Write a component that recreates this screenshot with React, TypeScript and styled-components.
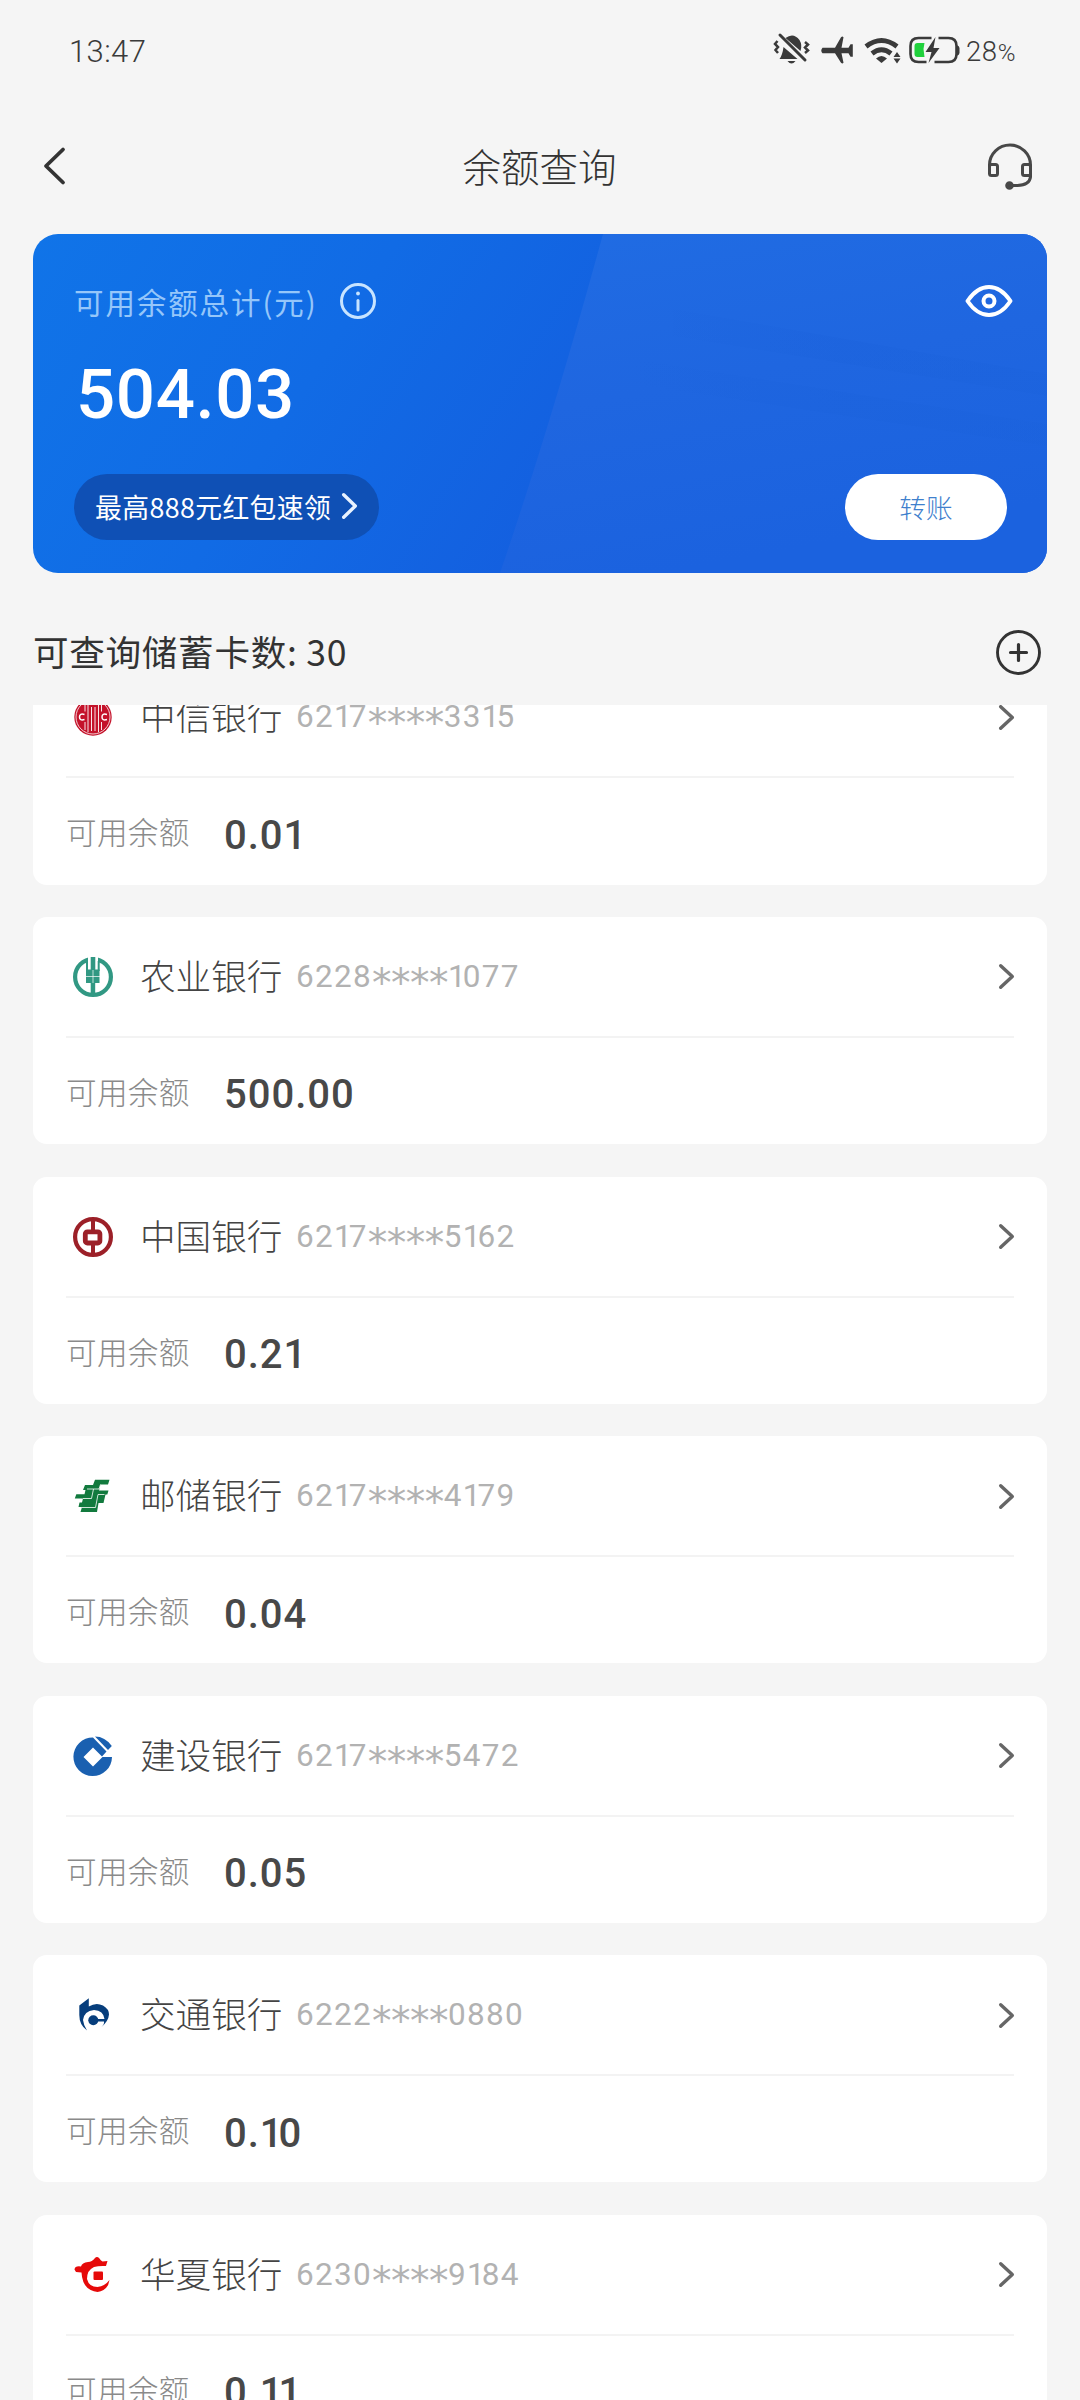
import React from 'react';
import styled, { createGlobalStyle } from 'styled-components';

const cjk = `'Noto Sans CJK SC', 'Noto Sans', sans-serif`;
const digits = `Roboto, Inter, 'Noto Sans CJK SC', sans-serif`;

const GlobalStyle = createGlobalStyle`
  * { box-sizing: border-box; }
  body { margin: 0; background: #f5f5f5; }
  svg { display: block; overflow: visible; flex: none; }
`;

const Screen = styled.div`
  width: 1080px;
  height: 2400px;
  overflow: hidden;
  display: flex;
  flex-direction: column;
  background: #f5f5f5;
  font-family: ${cjk};
  color: #333;
`;

const StatusBar = styled.header`
  height: 102px;
  padding: 0 62px 0 69px;
  display: flex;
  align-items: center;
  justify-content: space-between;
  font-family: ${digits};
  color: #3a3a3a;
`;

const Clock = styled.time`
  font-size: 31px;
  font-weight: 300;
  letter-spacing: 0.4px;
`;

const StatusIcons = styled.div`
  display: flex;
  align-items: center;
`;

const BatteryText = styled.span`
  margin-left: 6px;
  width: 52px;
  font-size: 27.5px;
  font-weight: 300;
  line-height: 40px;
  letter-spacing: 0.6px;
  padding-top: 2px;
  white-space: nowrap;
  small { font-size: 24px; }
`;

const NavBar = styled.nav`
  height: 132px;
  padding: 0 48px 3px 43px;
  display: grid;
  grid-template-columns: 100px 1fr 98px;
  align-items: center;
`;

const NavTitle = styled.h1`
  margin: 0;
  padding: 0 0 3px 2px;
  text-align: center;
  font-size: 38.5px;
  font-weight: 300;
  line-height: 58px;
`;

const NavEnd = styled.div`
  display: flex;
  justify-content: flex-end;
`;

const Summary = styled.section`
  position: relative;
  flex: none;
  height: 339px;
  margin: 0 33px;
  padding: 40px 40px 32px 41px;
  border-radius: 25px;
  overflow: hidden;
  display: flex;
  flex-direction: column;
  background: linear-gradient(122deg, #1074e8 0%, #116be5 30%, #145edf 60%, #145edf 100%);
`;

const Sheen = styled.svg`
  position: absolute;
  left: 0;
  top: 0;
`;

const SummaryRow = styled.div`
  position: relative;
  display: flex;
  align-items: center;
  justify-content: space-between;
`;

const EyeButton = styled.div`
  margin-right: -6px;
`;

const SummaryLabel = styled.div`
  display: flex;
  align-items: center;
  gap: 22px;
  height: 54px;
  padding-bottom: 1px;
  font-size: 29.5px;
  letter-spacing: 1.9px;
  color: #95c6fa;
`;

const Total = styled.strong`
  position: relative;
  height: 106px;
  margin-bottom: 40px;
  padding: 27px 0 0 2px;
  font-family: ${digits};
  font-weight: 500;
  font-size: 69px;
  line-height: 80px;
  letter-spacing: 0.6px;
  color: #fff;
`;

const PromoPill = styled.button`
  display: flex;
  align-items: center;
  gap: 11px;
  height: 66px;
  padding: 0 22px 2px 21px;
  border: 0;
  border-radius: 33px;
  background: #0f50b5;
  color: #fff;
  font-family: ${cjk};
  font-size: 26.8px;
  letter-spacing: 0.4px;
`;

const TransferButton = styled.button`
  width: 162px;
  height: 66px;
  padding: 0 0 2px;
  border: 0;
  border-radius: 33px;
  background: #fff;
  color: #3f80cd;
  font-family: ${cjk};
  font-size: 26.7px;
  font-weight: 300;
`;

const ListHeader = styled.div`
  flex: none;
  height: 132px;
  padding: 27px 39px 0 33px;
  display: flex;
  align-items: center;
  justify-content: space-between;
`;

const ListTitle = styled.h2`
  margin: 0;
  padding-bottom: 3px;
  font-size: 35.6px;
  font-weight: 400;
  line-height: 52px;
  letter-spacing: 0.7px;
`;

const CardList = styled.main`
  flex: 1;
  min-height: 0;
  overflow: hidden;
  padding: 0 33px;
`;

const Cards = styled.div`
  margin-top: -47.6px;
  display: flex;
  flex-direction: column;
  gap: 32.4px;
`;

const BankCard = styled.article`
  height: 227.2px;
  padding: 0 33px;
  border-radius: 14px;
  background: #fff;
`;

const BankHead = styled.div`
  height: 121px;
  padding-top: 1px;
  display: flex;
  align-items: center;
  border-bottom: 2px solid #f3f3f3;
`;

const LogoBox = styled.div`
  width: 40px;
  height: 40px;
  margin: 0 27px 0 7px;
`;

const BankName = styled.span`
  width: 156px;
  padding-bottom: 4px;
  font-size: 35.6px;
  font-weight: 300;
  line-height: 50px;
  color: #444;
`;

const CardNumber = styled.span`
  flex: 1;
  padding-top: 1px;
  font-family: ${digits};
  font-size: 31.5px;
  font-weight: 400;
  line-height: 40px;
  letter-spacing: 1.3px;
  color: #b2b2b2;
  white-space: nowrap;
`;

const Stars = styled.span`
  font-family: 'DejaVu Sans', sans-serif;
  font-size: 39px;
  line-height: 30px;
  letter-spacing: -0.5px;
  vertical-align: -9px;
`;

const NarrowDigit = styled.span<{ $trim: number }>`
  letter-spacing: ${(p) => p.$trim}px;
`;

const BalanceRow = styled.div`
  height: 106px;
  padding-top: 3px;
  display: flex;
  align-items: center;
`;

const BalanceLabel = styled.span`
  width: 158px;
  padding-bottom: 3px;
  font-size: 30.6px;
  font-weight: 300;
  letter-spacing: 0.3px;
  color: #8a8a8a;
`;

const Balance = styled.span`
  padding-top: 5px;
  font-family: ${digits};
  font-size: 40px;
  font-weight: 500;
  letter-spacing: 1px;
  color: #484848;
`;

const Digits = ({ value, trim }: { value: string; trim: number }) => (
  <>
    {value.split(/(1)/).filter(Boolean).map((part, i) =>
      part === '1' ? <NarrowDigit key={i} $trim={trim}>{part}</NarrowDigit> : part,
    )}
  </>
);

const Chevron = ({ w, h, color, sw }: { w: number; h: number; color: string; sw: number }) => (
  <svg width={w} height={h} fill="none" stroke={color} strokeWidth={sw} strokeLinecap="round" strokeLinejoin="round">
    <path d={`M${sw / 2} ${sw / 2}L${w - sw / 2} ${h / 2}L${sw / 2} ${h - sw / 2}`} />
  </svg>
);

const StatusGlyphs = () => (
  <svg width="186" height="34" viewBox="774.500 34 186 34" fill="#3a3a3a">
    <path d="M786 38q8-6 14 2q3 5 1 11zM784 47l14 12h-18q3-4 4-12zM788 61h8q-4 5-8 0z" />
    <path d="M780.500 35l25 25" stroke="#3a3a3a" strokeWidth="3" strokeLinecap="round" />
    <path d="M778 41l-2.500 3 3 3-2.500 3 2.500 3M805.500 42l3 2.500-3 3 3 3-3 2.500" fill="none" stroke="#3a3a3a" strokeWidth="2.500" />
    <path d="M823 47.800h12.500l6-10.500q1.500-1.500 2.500 0l-2 10.500h7l2-3.500h2.300v12.500h-2.300l-2-3.500h-7l2 9.500q-1 1.500-2.500 0l-6-9.500h-12.500q-2.500-2.700 0-5.500z" />
    <g fill="none" stroke="#3a3a3a" strokeWidth="4.800">
      <path d="M866.500 46.500q15.500-12 31 0" />
      <path d="M872.500 53.500q9.500-7.500 19 0" />
    </g>
    <path d="M876.500 58.500q5.500-5 11 0l-5.500 4.500z" />
    <path d="M897.500 52l3.500 5h-7zM894 58.500h7l-3.500 5z" />
    <g fill="none" stroke="#3a3a3a" strokeWidth="2.600">
      <path d="M932 38h-13q-8 0-8 8v8q0 8 8 8h8" />
      <path d="M939 38h10q8 0 8 8v8q0 8-8 8h-14" />
    </g>
    <path d="M957 45q3 1 3 3v5q0 2-3 3z" />
    <path d="M918 43h7l-1 6 1 8h-7q-3 0-3-3v-8q0-3 3-3z" fill="#20d13c" />
    <path d="M936 37l-10 15h6l-3 11 11-15h-6z" />
  </svg>
);

const Headset = () => (
  <svg width="44" height="46" viewBox="0 0 44 46" fill="none" stroke="#484848" strokeWidth="3">
    <path d="M1.500 30V21a20.500 20 0 0 1 41 0v12q-1 8-13 8.500H22" />
    <rect x="1.500" y="20.500" width="8" height="11" rx="2" />
    <rect x="34.500" y="20.500" width="8" height="11" rx="2" />
    <circle cx="21.500" cy="41.500" r="2.800" fill="#484848" />
  </svg>
);

const InfoIcon = () => (
  <svg width="36" height="36" fill="none" stroke="#c8e4ff" strokeWidth="3" strokeLinecap="round">
    <circle cx="18" cy="18" r="16.500" />
    <path d="M18 17.500V27" />
    <circle cx="18" cy="10.500" r="1.900" fill="#c8e4ff" stroke="none" />
  </svg>
);

const EyeIcon = () => (
  <svg width="48" height="32" fill="none" stroke="#fff" strokeWidth="4">
    <path d="M2.500 16Q12 2 24 2T45.500 16Q36 30 24 30T2.500 16z" strokeLinejoin="round" />
    <circle cx="24" cy="16" r="5.500" />
  </svg>
);

const PlusCircle = () => (
  <svg width="45" height="45" fill="none" stroke="#333" strokeWidth="2.900" strokeLinecap="round">
    <circle cx="22.500" cy="22.500" r="21" />
    <path d="M22.500 14.500v16M14.500 22.500h16" strokeWidth="3.200" />
  </svg>
);

const logos: Record<string, React.ReactNode> = {
  citic: (
    <>
      <circle cx="20" cy="20" r="18.700" fill="#c4122a" />
      <circle cx="20" cy="20" r="17" fill="none" stroke="#fff" strokeWidth="0.800" />
      <path d="M15 5v30M25.500 5v30M18.500 10v24M22 10v24M12 7.500v7M28.500 7.500v7M12 25v8M28.500 25v8" stroke="#fff" strokeWidth="0.900" />
      <path d="M11.500 17.500q-5-1.500-5 2.500t5 2.500M34 17.500q-5-1.500-5 2.500t5 2.500" fill="none" stroke="#fff" strokeWidth="1.500" />
    </>
  ),
  abc: (
    <>
      <circle cx="20" cy="20" r="17.900" fill="none" stroke="#319883" strokeWidth="4.200" />
      <path d="M15 -1h10v14H15z" fill="#fff" />
      <path d="M17.700 0h4.600v12.500h-4.600zM13 12.500H26.500V26H22.200V38H17.700V26H13z" fill="#319883" />
      <path d="M14 4v10M25.700 4v10" stroke="#319883" strokeWidth="2" />
      <path d="M13 19.500h14M20 13v13" stroke="#fff" strokeWidth="0.700" />
    </>
  ),
  boc: (
    <g fill="none" stroke="#9c2028">
      <circle cx="20" cy="20" r="17.900" strokeWidth="4.200" />
      <path d="M20 3v10M20 28v9" strokeWidth="4" />
      <rect x="12.300" y="14.800" width="14.600" height="11.200" rx="2" strokeWidth="4.800" />
    </g>
  ),
  psbc: (
    <>
      <path d="M22 3.700H36.500L35 8.500H27.500L26 14.500H35.500L34.300 18.500H32.500L30.500 27H25.500L24 36H7.500L9 31H5.500L6.500 26.500H9L10 22.500H1.800L3.300 18.300H11.500L12.500 14H10L12 9H20z" fill="#127a3e" />
      <path d="M27.500 8.500L26 13H14M20.500 13L18.500 22.500H10M31.500 18.500H25L22.500 31.500H9" fill="none" stroke="#fff" strokeWidth="0.800" />
    </>
  ),
  ccb: (
    <>
      <path d="M20 1.500L33.500 15.500 29 20.500 20 11.500 10.500 21 20 30.500 29.500 21H39A19.300 19.300 0 1 1 20 1.500z" fill="#1a60b0" />
      <path d="M22 0.500Q32 0.500 38.800 10L35 14z" fill="#1a60b0" />
    </>
  ),
  bocom: (
    <g fill="#073e7c">
      <path d="M6.300 10.500L15.800 3.300V11.500Q23 7 30 10.500Q36 14 36 19.500Q35.500 26 28.500 32Q31.500 29 31 26.500H24V24H31.500Q30.500 15.500 21 15Q11 16 10 25Q10.500 30 14 35.500Q6.300 30 6.300 20z" />
      <circle cx="20.300" cy="25.300" r="5" />
    </g>
  ),
  hxb: (
    <g fill="#e60a0a">
      <path d="M1.500 14.500q.5-4 6.500-3 1-4 7-4.500 4 0 7-4 2-2 4.500.5 1 2 3 3l5-.5-1.500 5q-7-.5-12 1-7 3-7 12 2 8 10.500 8 7.500-1 12-7-1.500 10.500-12 12Q9.500 35.500 8.500 17.500L3 17z" />
      <rect x="20.500" y="16.500" width="9.500" height="8.500" rx="1" />
    </g>
  ),
};

const accounts = [
  { logo: 'citic', name: '中信银行', head: '6217', tail: '3315', balance: '0.01' },
  { logo: 'abc', name: '农业银行', head: '6228', tail: '1077', balance: '500.00' },
  { logo: 'boc', name: '中国银行', head: '6217', tail: '5162', balance: '0.21' },
  { logo: 'psbc', name: '邮储银行', head: '6217', tail: '4179', balance: '0.04' },
  { logo: 'ccb', name: '建设银行', head: '6217', tail: '5472', balance: '0.05' },
  { logo: 'bocom', name: '交通银行', head: '6222', tail: '0880', balance: '0.10' },
  { logo: 'hxb', name: '华夏银行', head: '6230', tail: '9184', balance: '0.11' },
];

export default function App() {
  return (
    <Screen>
      <GlobalStyle />
      <StatusBar>
        <Clock>13:47</Clock>
        <StatusIcons>
          <StatusGlyphs />
          <BatteryText>28<small>%</small></BatteryText>
        </StatusIcons>
      </StatusBar>
      <NavBar>
        <svg width="22" height="38" fill="none" stroke="#333" strokeWidth="3.800" strokeLinecap="round" strokeLinejoin="round">
          <path d="M20 1.500L3 18L20 34.500" />
        </svg>
        <NavTitle>余额查询</NavTitle>
        <NavEnd><Headset /></NavEnd>
      </NavBar>
      <Summary>
        <Sheen width="1014" height="339">
          <defs>
            <linearGradient id="sheen" x1="0" y1="0" x2="0.300" y2="1">
              <stop offset="0" stopColor="#206ce3" />
              <stop offset="0.500" stopColor="#1f66e0" />
              <stop offset="1" stopColor="#1b62df" />
            </linearGradient>
            <linearGradient id="band" x1="0" y1="0" x2="1" y2="0">
              <stop offset="0" stopColor="#1b62dc" stopOpacity="0" />
              <stop offset="0.500" stopColor="#1b62dc" stopOpacity="0.400" />
              <stop offset="1" stopColor="#1b62dc" stopOpacity="0.400" />
            </linearGradient>
          </defs>
          <path d="M570 0H1014V339H467Q518 190 570 0z" fill="url(#sheen)" />
          <path d="M640 75L1014 140V162L640 102zM600 125L1014 190V212L600 150z" fill="url(#band)" />
        </Sheen>
        <SummaryRow>
          <SummaryLabel>
            可用余额总计(元)
            <InfoIcon />
          </SummaryLabel>
          <EyeButton><EyeIcon /></EyeButton>
        </SummaryRow>
        <Total>504.03</Total>
        <SummaryRow>
          <PromoPill>
            最高888元红包速领
            <Chevron w={15} h={26} color="#e8f2ff" sw={3.4} />
          </PromoPill>
          <TransferButton>转账</TransferButton>
        </SummaryRow>
      </Summary>
      <ListHeader>
        <ListTitle>可查询储蓄卡数: 30</ListTitle>
        <PlusCircle />
      </ListHeader>
      <CardList>
        <Cards>
          {accounts.map((a) => (
            <BankCard key={a.logo}>
              <BankHead>
                <LogoBox>
                  <svg width="40" height="40">{logos[a.logo]}</svg>
                </LogoBox>
                <BankName>{a.name}</BankName>
                <CardNumber>
                  <Digits value={a.head} trim={-3} />
                  <Stars>****</Stars>
                  <Digits value={a.tail} trim={-3} />
                </CardNumber>
                <Chevron w={15} h={25} color="#666" sw={3.4} />
              </BankHead>
              <BalanceRow>
                <BalanceLabel>可用余额</BalanceLabel>
                <Balance><Digits value={a.balance} trim={-4} /></Balance>
              </BalanceRow>
            </BankCard>
          ))}
        </Cards>
      </CardList>
    </Screen>
  );
}
